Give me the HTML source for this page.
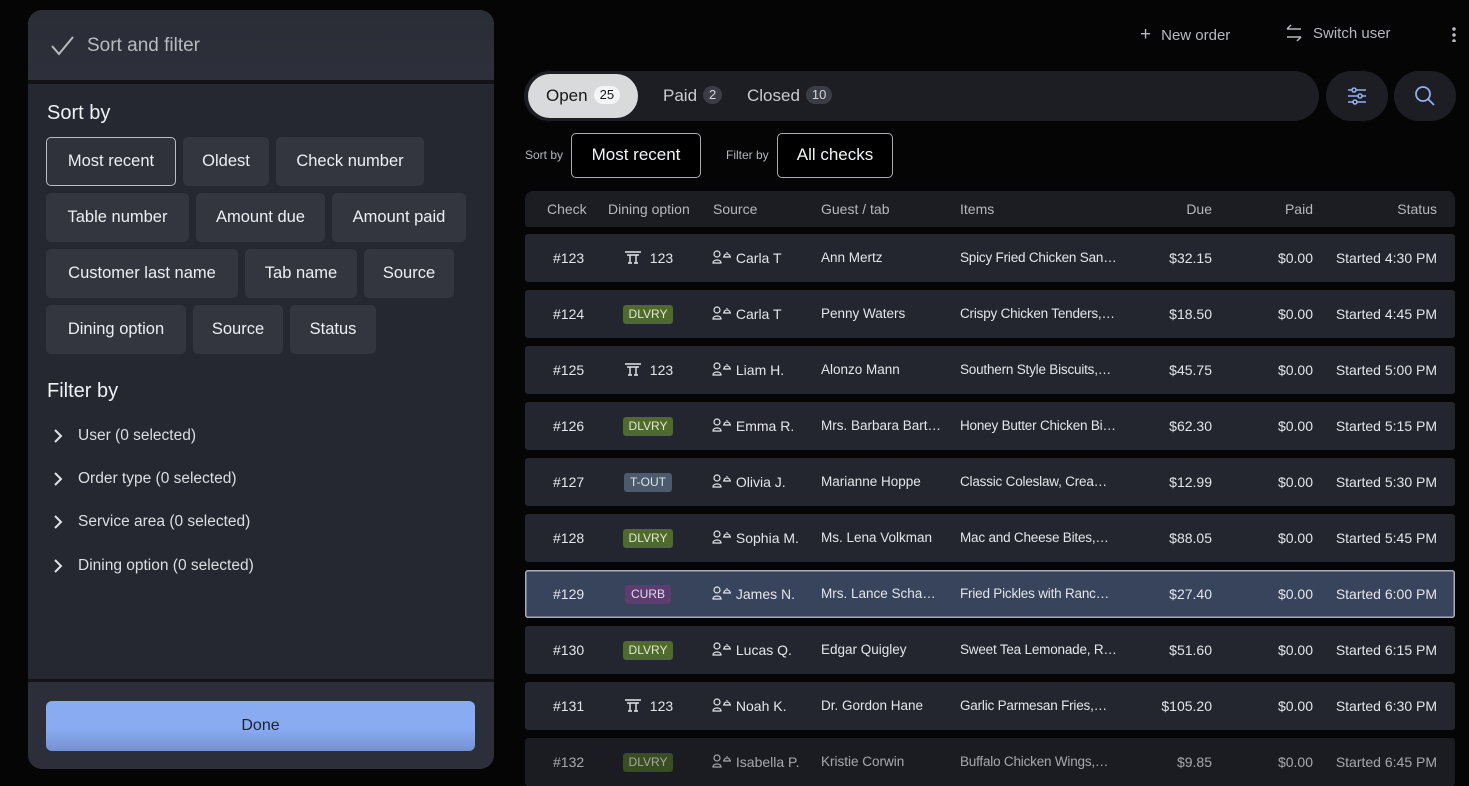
<!DOCTYPE html>
<html><head><meta charset="utf-8"><style>
*{box-sizing:border-box;margin:0;padding:0}
body{width:1469px;height:784px;background:#050506;font-family:"Liberation Sans",sans-serif;position:relative;overflow:hidden;color:#e6e7ea}
.abs{position:absolute}
#panel{left:28px;top:10px;width:466px;height:759px;border-radius:14px;background:#252831;overflow:hidden}
#ph{left:0;top:0;width:466px;height:70px;background:linear-gradient(#2a2d36,#2d303a)}
#div1{left:0;top:70px;width:466px;height:4px;background:#121317}
#div2{left:0;top:669px;width:466px;height:3px;background:#121317}
#pf{left:0;top:672px;width:466px;height:87px;background:#2c2f39}
.chip{position:absolute;height:49px;border-radius:5px;background:#33363f;color:#eceef2;font-size:16.5px;line-height:49px;text-align:center}
.chip.sel{border:1.5px solid #b9bcc4;line-height:46px;background:#2f323b}
.h2{font-size:20px;color:#f0f1f4;position:absolute}
.fi{position:absolute;left:50px;font-size:15.5px;color:#dcdee3}
.fi svg{position:absolute;left:-26px;top:1px}
#done{left:18px;top:691px;width:429px;height:50px;border-radius:6px;background:linear-gradient(#89abf2 55%,#7592d2);color:#1d2330;font-size:16px;text-align:center;line-height:50px}
.top{font-size:15px;color:#b7b9be}
#tabs{left:524px;top:71px;width:795px;height:50px;border-radius:25px;background:#1c1e24}
.cnt{display:inline-block;background:#3a3d45;color:#d4d6da;border-radius:10px;font-size:13px;line-height:18px;height:18px;padding:0 6px;margin-left:6px;vertical-align:2px}
.circ{width:62px;height:50px;border-radius:25px;background:#1c1e24}
.selbox{border:1.5px solid #a9acb3;border-radius:5px;height:45px;background:#000;color:#f2f3f5;font-size:17px;line-height:42px;text-align:center}
.row{position:absolute;left:525px;width:930px;height:48px;background:#23262e;border-radius:3px;font-size:14px;color:#e3e5e9}
.row div,.hdr div{position:absolute;top:0;line-height:48px;white-space:nowrap}
.hdr{position:absolute;left:525px;top:191px;width:930px;height:36px;background:#1b1d23;border-radius:8px 8px 3px 3px;font-size:14px;color:#b5b7bd}
.hdr div{line-height:36px}
.tag{display:inline-block;font-size:12px;line-height:19px;padding:0 6px;border-radius:3px;vertical-align:1px}
.dl{background:#4e6a2d;color:#dfe8d2}.to{background:#4b5b6d;color:#dce2e8}.cu{background:#5b3d70;color:#e3d7ea}
.r{text-align:right}
</style></head><body>
<div id="panel" class="abs">
 <div id="ph" class="abs">
  <svg class="abs" style="left:22px;top:24px" width="26" height="24" viewBox="0 0 26 24"><path d="M2 12 L9 20 L23 3" fill="none" stroke="#b9bbc0" stroke-width="2"/></svg>
  <div class="abs" style="left:59px;top:25px;font-size:19px;color:#b8bac0">Sort and filter</div>
 </div>
 <div id="div1" class="abs"></div>
 <div class="h2" style="left:19px;top:92px">Sort by</div>
 <div class="chip sel" style="left:18px;top:127px;width:130px">Most recent</div>
 <div class="chip" style="left:155px;top:127px;width:86px">Oldest</div>
 <div class="chip" style="left:248px;top:127px;width:148px">Check number</div>
 <div class="chip" style="left:18px;top:183px;width:143px">Table number</div>
 <div class="chip" style="left:168px;top:183px;width:129px">Amount due</div>
 <div class="chip" style="left:304px;top:183px;width:134px">Amount paid</div>
 <div class="chip" style="left:18px;top:239px;width:192px">Customer last name</div>
 <div class="chip" style="left:217px;top:239px;width:112px">Tab name</div>
 <div class="chip" style="left:336px;top:239px;width:90px">Source</div>
 <div class="chip" style="left:18px;top:295px;width:140px">Dining option</div>
 <div class="chip" style="left:165px;top:295px;width:90px">Source</div>
 <div class="chip" style="left:262px;top:295px;width:86px">Status</div>
 <div class="h2" style="left:19px;top:370px">Filter by</div>
 <div class="fi" style="top:417px"><svg width="12" height="16" viewBox="0 0 12 16"><path d="M3 2 L9 8 L3 14" fill="none" stroke="#e0e2e6" stroke-width="2"/></svg>User (0 selected)</div>
 <div class="fi" style="top:460px"><svg width="12" height="16" viewBox="0 0 12 16"><path d="M3 2 L9 8 L3 14" fill="none" stroke="#e0e2e6" stroke-width="2"/></svg>Order type (0 selected)</div>
 <div class="fi" style="top:503px"><svg width="12" height="16" viewBox="0 0 12 16"><path d="M3 2 L9 8 L3 14" fill="none" stroke="#e0e2e6" stroke-width="2"/></svg>Service area (0 selected)</div>
 <div class="fi" style="top:547px"><svg width="12" height="16" viewBox="0 0 12 16"><path d="M3 2 L9 8 L3 14" fill="none" stroke="#e0e2e6" stroke-width="2"/></svg>Dining option (0 selected)</div>
 <div id="div2" class="abs"></div>
 <div id="pf" class="abs"></div>
 <div id="done" class="abs">Done</div>
</div>

<div class="abs top" style="left:1140px;top:24px"><span style="font-size:19px;margin-right:10px">+</span>New order</div>
<svg class="abs" style="left:1285px;top:24px" width="18" height="18" viewBox="0 0 18 18"><path d="M2 5 H16 M2 5 L6 1 M16 13 H2 M16 13 L12 17" fill="none" stroke="#b7b9be" stroke-width="1.5"/></svg>
<div class="abs top" style="left:1313px;top:25px">Switch user</div>
<div class="abs" style="left:1452px;top:26px;width:4px;height:16px;background:radial-gradient(circle,#b7b9be 1.6px,transparent 2px) 0 0/4px 6px repeat-y"></div>

<div id="tabs" class="abs">
 <div class="abs" style="left:4px;top:3px;width:110px;height:44px;border-radius:22px;background:#d9dadc;color:#16181c;font-size:17px;line-height:44px;padding-left:18px">Open<span class="cnt" style="background:#f5f5f6;color:#16181c">25</span></div>
 <div class="abs" style="left:139px;top:0;line-height:50px;font-size:17px;color:#c9cbcf">Paid<span class="cnt">2</span></div>
 <div class="abs" style="left:223px;top:0;line-height:50px;font-size:17px;color:#c9cbcf">Closed<span class="cnt">10</span></div>
</div>
<div class="abs circ" style="left:1326px;top:71px"><svg style="position:absolute;left:20px;top:14px" width="22" height="22" viewBox="0 0 22 22" fill="none" stroke="#8fb0f0" stroke-width="1.6"><path d="M2 5H20M2 11H20M2 17H20"/><circle cx="8" cy="5" r="2" fill="#1c1e24"/><circle cx="14" cy="11" r="2" fill="#1c1e24"/><circle cx="9" cy="17" r="2" fill="#1c1e24"/></svg></div>
<div class="abs circ" style="left:1394px;top:71px"><svg style="position:absolute;left:20px;top:14px" width="22" height="22" viewBox="0 0 22 22" fill="none" stroke="#8fb0f0" stroke-width="1.8"><circle cx="9" cy="9" r="7"/><path d="M14 14L20 20"/></svg></div>

<div class="abs" style="left:525px;top:148px;font-size:12px;color:#b5b7bd">Sort by</div>
<div class="abs selbox" style="left:571px;top:133px;width:130px">Most recent</div>
<div class="abs" style="left:726px;top:148px;font-size:12px;color:#b5b7bd">Filter by</div>
<div class="abs selbox" style="left:777px;top:133px;width:116px">All checks</div>

<div class="hdr"><div style="left:22px">Check</div><div style="left:83px">Dining option</div><div style="left:188px">Source</div><div style="left:296px">Guest / tab</div><div style="left:435px">Items</div><div class="r" style="right:243px">Due</div><div class="r" style="right:142px">Paid</div><div class="r" style="right:18px">Status</div></div>

<svg width="0" height="0" style="position:absolute"><defs>
<symbol id="tb" viewBox="0 0 18 14"><path d="M1 2H17M3 5H15M6 5V13M12 5V13M4 13H8M10 13H14" fill="none" stroke="#e3e5e9" stroke-width="1.4"/></symbol>
<symbol id="us" viewBox="0 0 20 14"><circle cx="5" cy="4" r="3" fill="none" stroke="#e3e5e9" stroke-width="1.2"/><path d="M1 13C1 9 9 9 9 13Z" fill="none" stroke="#e3e5e9" stroke-width="1.2"/><path d="M11 7H19M12 7C12 3 18 3 18 7M15 2V3" fill="none" stroke="#e3e5e9" stroke-width="1.2"/></symbol>
</defs></svg>

<div id="rows"></div>
<script>
const d=[["#123","t","Carla T","Ann Mertz","Spicy Fried Chicken San…","$32.15","4:30"],
["#124","dl","Carla T","Penny Waters","Crispy Chicken Tenders,…","$18.50","4:45"],
["#125","t","Liam H.","Alonzo Mann","Southern Style Biscuits,…","$45.75","5:00"],
["#126","dl","Emma R.","Mrs. Barbara Bart…","Honey Butter Chicken Bi…","$62.30","5:15"],
["#127","to","Olivia J.","Marianne Hoppe","Classic Coleslaw, Crea…","$12.99","5:30"],
["#128","dl","Sophia M.","Ms. Lena Volkman","Mac and Cheese Bites,…","$88.05","5:45"],
["#129","cu","James N.","Mrs. Lance Scha…","Fried Pickles with Ranc…","$27.40","6:00"],
["#130","dl","Lucas Q.","Edgar Quigley","Sweet Tea Lemonade, R…","$51.60","6:15"],
["#131","t","Noah K.","Dr. Gordon Hane","Garlic Parmesan Fries,…","$105.20","6:30"],
["#132","dl","Isabella P.","Kristie Corwin","Buffalo Chicken Wings,…","$9.85","6:45"]];
let h="";d.forEach((r,i)=>{const y=234+i*56;let din;
if(r[1]=="t")din='<div style="left:99px"><svg width="18" height="14" style="vertical-align:-1px"><use href="#tb"/></svg>&nbsp; 123</div>';
else{const lab={dl:"DLVRY",to:"T-OUT",cu:"CURB"}[r[1]];din='<div style="left:83px;width:80px;text-align:center"><span class="tag '+r[1]+'">'+lab+'</span></div>';}
const sel=i==6?'background:#37445b;box-shadow:inset 0 0 0 1.5px #a6adb9;':'';const op=i==9?'opacity:.72;':'';
h+='<div class="row" style="top:'+y+'px;'+sel+op+'"><div style="left:28px">'+r[0]+'</div>'+din+'<div style="left:187px"><svg width="20" height="14" style="vertical-align:-1px"><use href="#us"/></svg>&nbsp;'+r[2]+'</div><div style="left:296px;font-size:13.5px">'+r[3]+'</div><div style="left:435px;font-size:13.5px;letter-spacing:-0.2px">'+r[4]+'</div><div class="r" style="right:243px">'+r[5]+'</div><div class="r" style="right:142px">$0.00</div><div class="r" style="right:18px">Started '+r[6]+' PM</div></div>';});
document.getElementById("rows").innerHTML=h;
</script>
</body></html>
